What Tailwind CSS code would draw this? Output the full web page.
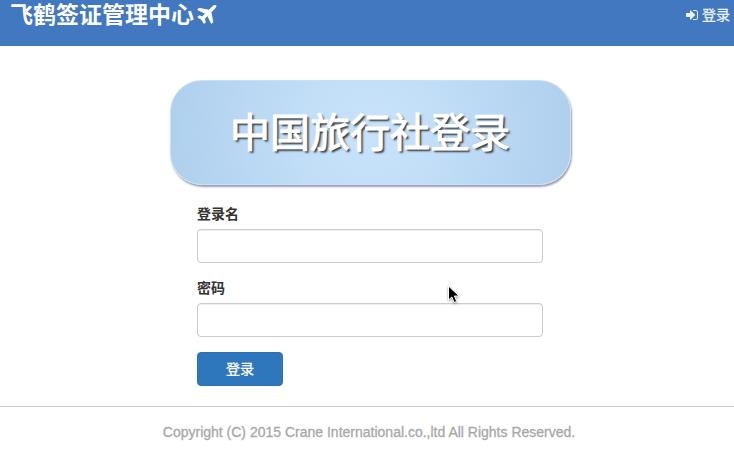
<!DOCTYPE html>
<html lang="zh-CN">
<head>
<meta charset="utf-8">
<meta name="viewport" content="width=device-width, initial-scale=1">
<title>飞鹤签证管理中心</title>
<script src="https://cdn.jsdelivr.net/npm/@tailwindcss/browser@4"></script>
</head>
<body class="relative min-h-screen bg-white text-sm text-[#333] font-['Liberation_Sans','Noto_Sans_CJK_SC',sans-serif]">
<header class="flex h-[46px] items-start justify-between bg-[#4178c0] pr-1 pl-[10px] text-white">
  <a href="#" class="flex items-center gap-[3px] text-[23px] leading-[30px] font-bold">
    <span>飞鹤签证管理中心</span>
    <svg class="h-5 w-5" viewBox="0 0 1408 1536" fill="currentColor" stroke="currentColor" stroke-width="70" aria-hidden="true"><path transform="translate(0 1408) scale(1 -1)" d="M1397 1324q0 -87 -149 -236l-240 -240l143 -746l1 -6q0 -14 -9 -23l-64 -64q-9 -9 -23 -9q-21 0 -29 18l-274 575l-245 -245q68 -238 68 -252t-9 -23l-64 -64q-9 -9 -23 -9q-18 0 -28 16l-155 280l-280 155q-17 9 -17 28q0 14 9 23l64 65q9 9 23 9t252 -68l245 245l-575 274q-18 8 -18 29q0 14 9 23l64 64q9 9 23 9q4 0 6 -1l746 -143l240 240q149 149 236 149q32 0 52.5 -20.5t20.5 -52.5z"/></svg>
  </a>
  <a href="#" class="flex items-center gap-1 leading-[30px] text-[#eaf2fc] [-webkit-text-stroke:0.3px_#eaf2fc]">
    <svg class="h-3 w-3" viewBox="0 0 1536 1536" fill="currentColor" aria-hidden="true"><path transform="translate(0 1408) scale(1 -1)" d="M1184 640q0 -26 -19 -45l-544 -544q-19 -19 -45 -19t-45 19t-19 45v288h-448q-26 0 -45 19t-19 45v384q0 26 19 45t45 19h448v288q0 26 19 45t45 19t45 -19l544 -544q19 -19 19 -45zM1536 992v-704q0 -119 -84.5 -203.5t-203.5 -84.5h-320q-13 0 -22.5 9.5t-9.5 22.5v64q0 32 32 32h320q66 0 113 47t47 113v704q0 66 -47 113t-113 47h-320q-32 0 -32 32v64q0 32 32 32h320q119 0 203.5 -84.5t84.5 -203.5z"/></svg>
    <span>登录</span>
  </a>
</header>
<main class="flex flex-col items-center pt-[34px] pl-[6px]">
  <h1 class="w-full max-w-[401px] rounded-[32px] border border-[#c5e0f8] bg-[radial-gradient(circle_at_center,#c8e2fa_0%,#c3dff8_30%,#afcfed_100%)] pt-[2px] text-center text-[40px] leading-[101px] font-normal text-white shadow-[1px_2px_2px_#9c9cb4] [text-shadow:2px_2px_2px_#333] [-webkit-text-stroke:1px_white]">中国旅行社登录</h1>
  <form class="flex w-full max-w-[346px] flex-col items-start pt-[19px]">
    <label for="user" class="mb-[5px] font-bold">登录名</label>
    <input id="user" type="text" class="mb-[15px] h-[34px] w-full rounded border border-[#ccc] bg-white px-3 shadow-[inset_0_1px_1px_#00000013]">
    <label for="password" class="mb-[5px] font-bold">密码</label>
    <input id="password" type="password" class="mb-[15px] h-[34px] w-full rounded border border-[#ccc] bg-white px-3 shadow-[inset_0_1px_1px_#00000013]">
    <button type="submit" class="h-[34px] w-[86px] rounded border border-[#2c70b2] bg-[#2f77bc] text-white [-webkit-text-stroke:0.3px_white]">登录</button>
  </form>
</main>
<footer class="mt-5 border-t border-[#ccc] py-[15px] pl-1 text-center text-sm text-[#a8a8a8] [-webkit-text-stroke:0.3px_#a8a8a8]">Copyright (C) 2015 Crane International.co.,ltd All Rights Reserved.</footer>
<svg class="pointer-events-none absolute top-[285px] left-[447px] h-[19px] w-[13px] drop-shadow-[0_1px_1px_#00000066]" viewBox="0 0 13 19" aria-hidden="true"><path d="M1.500 1v14l3.300-3 2.400 5.500 2.500-1.100L7.400 11H12z" fill="#000" stroke="#fff" stroke-width="1"/></svg>
</body>
</html>
